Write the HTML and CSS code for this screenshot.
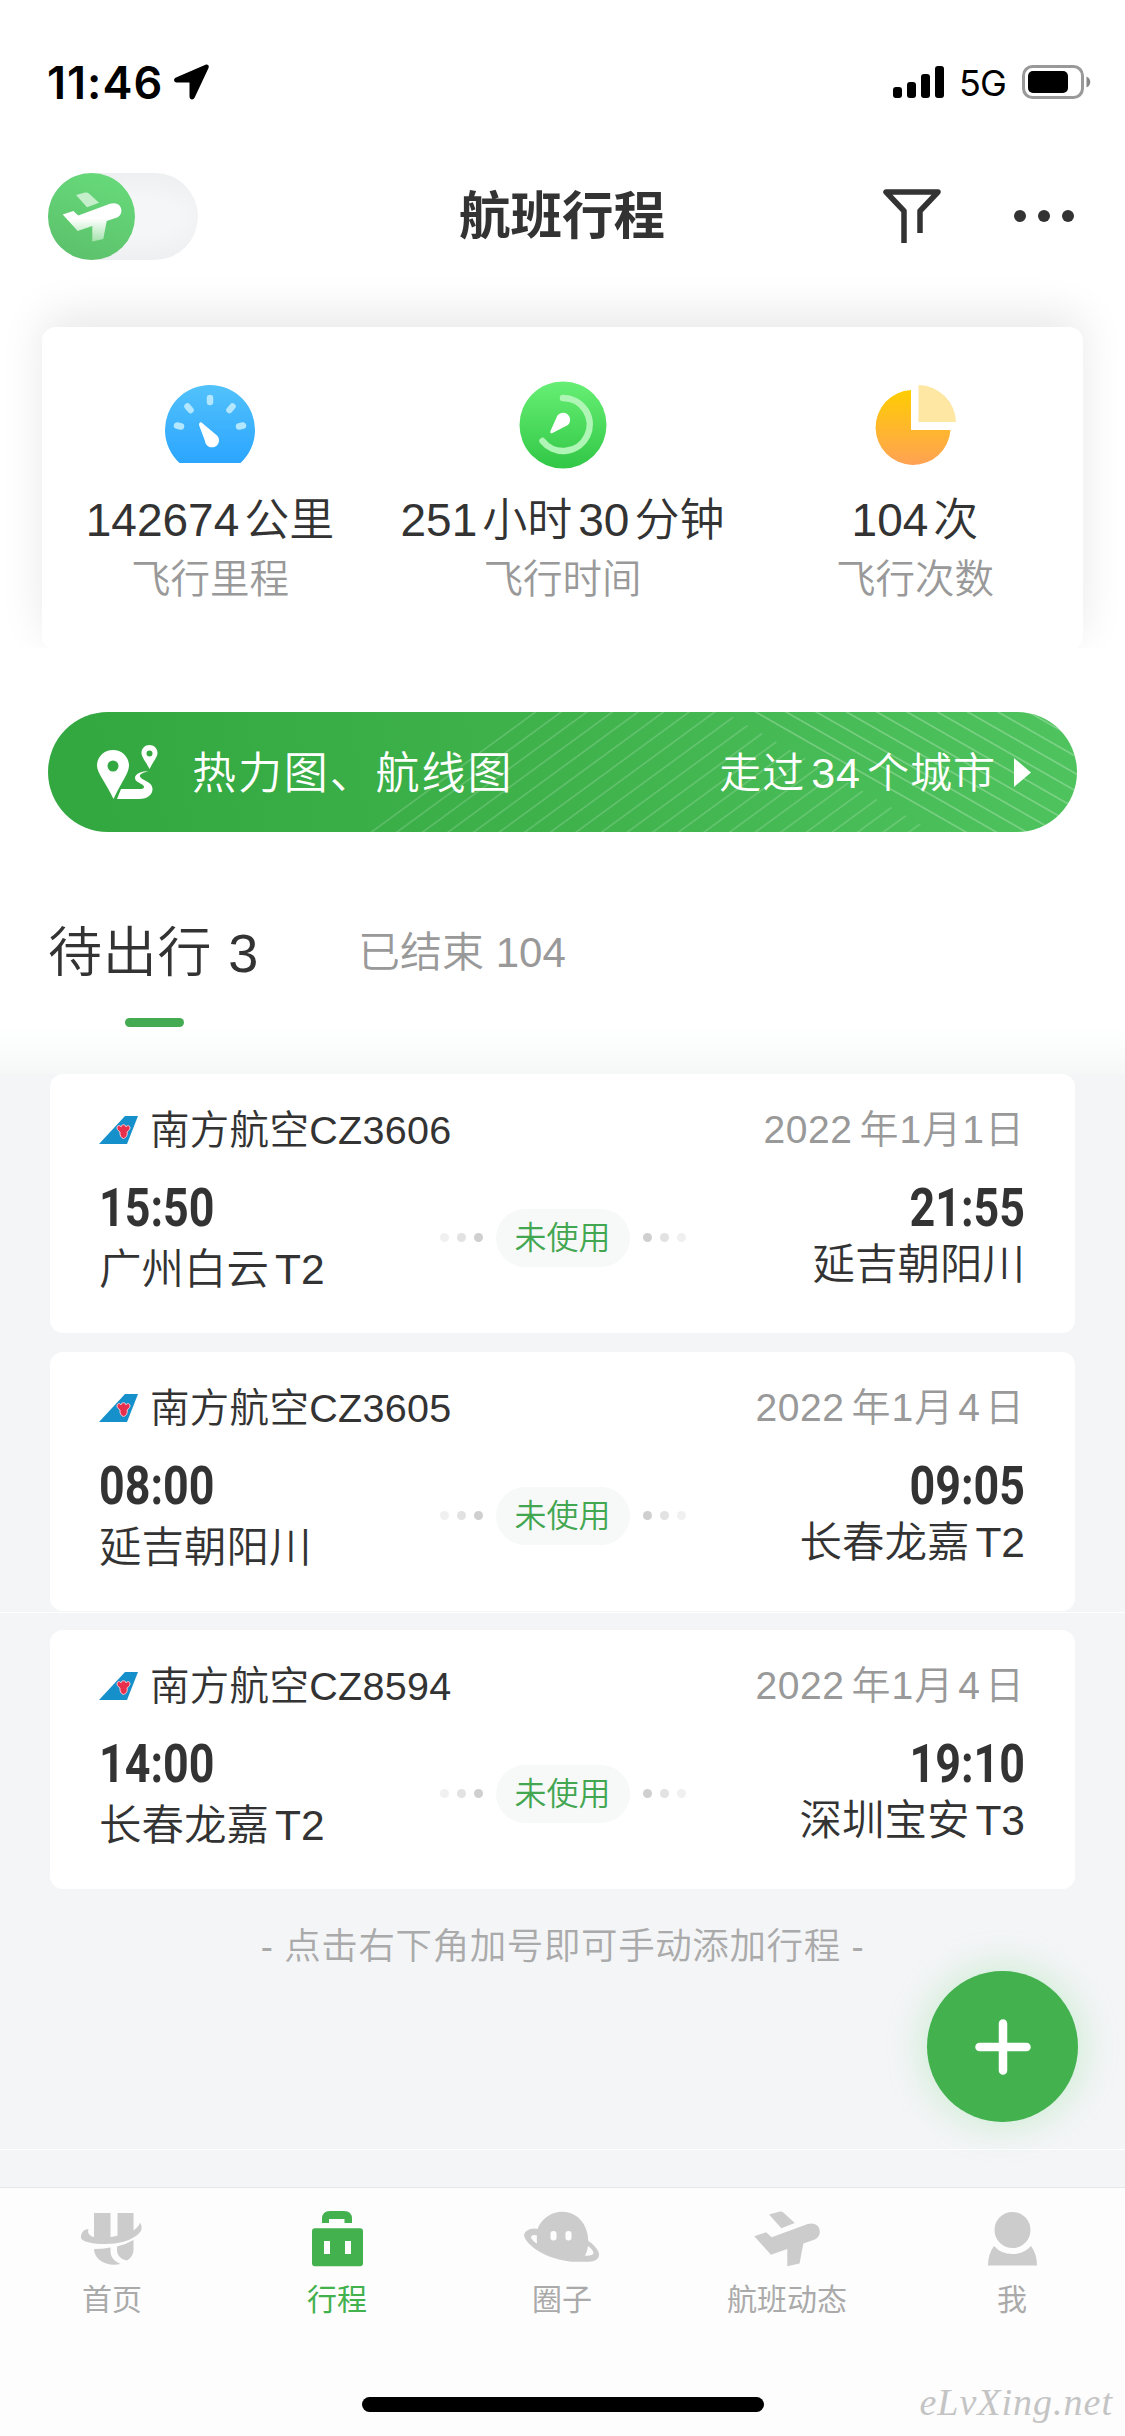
FILE: index.html
```html
<!DOCTYPE html>
<html lang="zh-CN">
<head>
  <meta charset="UTF-8" />
  <title>航班行程</title>
  <link rel="stylesheet" href="styles.css">
</head>
<body>
  <!-- shared icons -->
  <svg class="defs" width="0" height="0">
    <defs>
      <linearGradient id="planeFill" x1="0" y1="0" x2="0" y2="1">
        <stop offset="0" stop-color="#fff" />
        <stop offset=".4" stop-color="#fff" />
        <stop offset="1" stop-color="#a4e2ac" />
      </linearGradient>
      <symbol id="tail" viewBox="0 0 39 28">
        <path d="M26 0H39L28 28H0Z" fill="#1590cb" />
        <path d="M18 12c0-3 3-3 4-1 0-3 5-3 5 0 1-2 4-2 4 1 0 2-2 3-3 4 1 3-1 6-3.500 6.500C22 22 20.500 19 21 16c-1-1-3-2-3-4Z" fill="#e8304c" stroke="#f5c9d6" stroke-width="1" />
      </symbol>
    </defs>
  </svg>

  <div class="phone">
    <div class="top">
      <div class="status-bar">
        <div class="clock">11:46</div>
        <svg class="location" width="36" height="36" viewBox="0 0 36 36">
          <path d="M31.500 .8 2 13.500c-3 1.300-2.300 5 .8 5H15.500V32.500c0 3.300 3.800 4 5.200 1L34.500 4c1-2.200-.8-4-3-3.200Z" />
        </svg>
        <svg class="signal" width="52" height="32" viewBox="0 0 52 32">
          <rect x="0" y="21" width="9" height="11" rx="3" />
          <rect x="14" y="16" width="9" height="16" rx="3" />
          <rect x="28" y="8" width="9" height="24" rx="3" />
          <rect x="42" y="0" width="9" height="32" rx="3" />
        </svg>
        <div class="network">5G</div>
        <svg class="battery" width="69" height="34" viewBox="0 0 69 34">
          <rect x="1.500" y="1.500" width="59" height="31" rx="9" fill="none" stroke="#999" stroke-width="3" />
          <rect x="6" y="6" width="40" height="22" rx="5" />
          <path d="M64.500 11.500c5 2 5 9 0 11Z" fill="#888" />
        </svg>
      </div>

      <div class="nav-bar">
        <div class="switch">
          <div class="knob">
            <svg width="87" height="87" viewBox="0 0 87 87">
              <path d="M28 22 37 19.500Q39.500 19 41 20.500L51 29.700 39 34.300Z" fill="#c4efca" />
              <path d="M14.700 41.500 25.300 38 30.300 42.500 62 30.800C74 27 77 41 69 44.500L58.700 48 55.300 66 44.300 68.500V53L29.700 58Z" fill="url(#planeFill)" />
            </svg>
          </div>
        </div>
        <h1>航班行程</h1>
        <svg class="filter" width="58" height="54" viewBox="0 0 58 54" fill="none" stroke="#333" stroke-width="5.500" stroke-linejoin="round">
          <path d="M21 54V22L3 3H55L37 22V44" />
        </svg>
        <div class="more"><i></i><i></i><i></i></div>
      </div>
    </div>

    <div class="stats">
      <div class="stat">
        <svg width="90" height="88" viewBox="0 0 90 88">
          <defs>
            <linearGradient id="blue" x1="0" y1="0" x2="0" y2="1">
              <stop offset="0" stop-color="#52c2fb" /><stop offset="1" stop-color="#2ba5ff" />
            </linearGradient>
          </defs>
          <path d="M14.500 82A45 45 0 1 1 75.500 82Z" fill="url(#blue)" />
          <g stroke="#b3e6ff" stroke-width="6.500" stroke-linecap="round">
            <path d="M45 17v4M22.500 25.500l3 3.500M67.500 25.500l-3 3.500M12 44.500l4 1M78 44.500l-4 1" />
          </g>
          <path d="M36.500 41.500 52 54.500A7 7 0 1 1 40 60L34 44Q34 40.500 36.500 41.500Z" fill="#fff" />
        </svg>
        <div class="value"><span>142674</span>公里</div>
        <div class="label">飞行里程</div>
      </div>
      <div class="stat stat-time">
        <svg width="88" height="88" viewBox="0 0 88 88">
          <defs>
            <linearGradient id="green" x1="0" y1="0" x2="0" y2="1">
              <stop offset="0" stop-color="#66ef74" /><stop offset="1" stop-color="#32c746" />
            </linearGradient>
          </defs>
          <circle cx="44" cy="44" r="43.500" fill="url(#green)" />
          <path d="M44 17A26.500 26.500 0 1 1 23.500 60" fill="none" stroke="#aff5b5" stroke-width="6.500" stroke-linecap="round" />
          <path d="M37.500 36.500A7 7 0 1 1 46 45.500L33.500 52Q30.500 53 31.500 50Z" fill="#fff" />
        </svg>
        <div class="value"><span>251</span>小时<span class="mid">30</span>分钟</div>
        <div class="label">飞行时间</div>
      </div>
      <div class="stat">
        <svg width="82" height="88" viewBox="0 0 82 88">
          <defs>
            <linearGradient id="orange" x1="0" y1="0" x2="0" y2="1">
              <stop offset="0" stop-color="#ffcd02" /><stop offset="1" stop-color="#ffa254" />
            </linearGradient>
          </defs>
          <path d="M37 9A37.500 37.500 0 1 0 76.500 49H37Z" fill="url(#orange)" />
          <path d="M44.500 4A38 38 0 0 1 82 41H44.500Z" fill="#fee6a3" />
        </svg>
        <div class="value"><span>104</span>次</div>
        <div class="label">飞行次数</div>
      </div>
    </div>

    <div class="banner">
      <svg class="stripes" width="1029" height="120" viewBox="0 0 1029 120">
        <defs>
          <pattern id="rise" width="25.600" height="120" patternUnits="userSpaceOnUse" patternTransform="translate(486 0) skewX(-53.8)">
            <rect width="3" height="120" fill="#fff" opacity=".16" />
          </pattern>
          <pattern id="fall" width="30.300" height="120" patternUnits="userSpaceOnUse" patternTransform="translate(706 0) skewX(60.26)">
            <rect width="3.500" height="120" fill="#fff" opacity=".24" />
          </pattern>
        </defs>
        <path d="M484 0H676L886 120H320Z" fill="url(#rise)" />
        <path d="M705 0H1029V120H915Z" fill="url(#fall)" />
      </svg>
      <svg class="route" width="61" height="54" viewBox="0 0 61 54" fill="#fff">
        <path fill-rule="evenodd" d="M16 5C7 5 0 12 0 20.500 0 28 9 38 16.500 54 24 38 32 28 32 20.500 32 12 25 5 16 5Zm0 10.500a5.500 5.500 0 1 1 0 11 5.500 5.500 0 0 1 0-11Z" />
        <path fill-rule="evenodd" d="M52.500 0C48 0 44.500 3.500 44.500 8c0 4 4 8 8 16 4-8 8-12 8-16 0-4.500-3.500-8-8-8Zm0 5.500a3 3 0 1 1 0 6 3 3 0 0 1 0-6Z" />
        <path d="M52 26C44 26 38 29 38 33c0 5 9 5.500 9 9 0 2-3 2-6 2H24L20 54H42C51 54 56 49 55.500 43.500 55 36 44 35.500 43 31.500 42.500 29 46 27.500 52 26Z" />
      </svg>
      <div class="banner-title">热力图、航线图</div>
      <div class="cities">走过<span>34</span>个城市</div>
      <svg class="arrow" width="17" height="29" viewBox="0 0 17 29"><path d="M0 0 17 14.500 0 29Z" fill="#fff" /></svg>
    </div>

    <div class="tabs">
      <div class="tab active">待出行 3</div>
      <div class="tab">已结束 104</div>
    </div>

    <div class="list">
      <div class="card">
        <div class="card-head">
          <svg width="39" height="28"><use href="#tail" /></svg>
          <div class="flight">南方航空CZ3606</div>
          <div class="date"><span class="year">2022</span>年<span>1</span>月<span>1</span>日</div>
        </div>
        <div class="card-body">
          <div class="place">
            <div class="time">15:50</div>
            <div class="city">广州白云<span>T2</span></div>
          </div>
          <div class="state">
            <div class="dots"><i></i><i></i><i></i></div>
            <div class="badge">未使用</div>
            <div class="dots right"><i></i><i></i><i></i></div>
          </div>
          <div class="place arrive">
            <div class="time">21:55</div>
            <div class="city">延吉朝阳川</div>
          </div>
        </div>
      </div>

      <div class="card">
        <div class="card-head">
          <svg width="39" height="28"><use href="#tail" /></svg>
          <div class="flight">南方航空CZ3605</div>
          <div class="date"><span class="year">2022</span>年<span>1</span>月<span class="wide">4</span>日</div>
        </div>
        <div class="card-body">
          <div class="place">
            <div class="time">08:00</div>
            <div class="city">延吉朝阳川</div>
          </div>
          <div class="state">
            <div class="dots"><i></i><i></i><i></i></div>
            <div class="badge">未使用</div>
            <div class="dots right"><i></i><i></i><i></i></div>
          </div>
          <div class="place arrive">
            <div class="time">09:05</div>
            <div class="city">长春龙嘉<span>T2</span></div>
          </div>
        </div>
      </div>

      <div class="card">
        <div class="card-head">
          <svg width="39" height="28"><use href="#tail" /></svg>
          <div class="flight">南方航空CZ8594</div>
          <div class="date"><span class="year">2022</span>年<span>1</span>月<span class="wide">4</span>日</div>
        </div>
        <div class="card-body">
          <div class="place">
            <div class="time">14:00</div>
            <div class="city">长春龙嘉<span>T2</span></div>
          </div>
          <div class="state">
            <div class="dots"><i></i><i></i><i></i></div>
            <div class="badge">未使用</div>
            <div class="dots right"><i></i><i></i><i></i></div>
          </div>
          <div class="place arrive">
            <div class="time">19:10</div>
            <div class="city">深圳宝安<span>T3</span></div>
          </div>
        </div>
      </div>

      <div class="hint">- 点击右下角加号即可手动添加行程 -</div>
    </div>

    <div class="add">
      <svg width="56" height="56" viewBox="0 0 56 56" stroke="#fff" stroke-width="8.500" stroke-linecap="round">
        <path d="M28 4.500V51.500M4.500 28H51.500" />
      </svg>
    </div>

    <div class="tab-bar">
      <div class="item">
        <svg width="62" height="56" viewBox="0 0 62 56" fill="currentColor">
          <path d="M13 2H29.500V26Q33 25.500 36.500 24.500V2H52.500V19.500Q59 15 58.700 11.500 64 18 55 25 42 34 20 33C5 32-1 29 0 25 1 20 4 18.500 7.500 18 6 22 8.500 25 13 26Z" />
          <path d="M13 38Q21 38 29.500 36.500V40C29.500 46 33 50 39.500 53 26 56 13 49 13 38Z" />
          <path d="M36 35.500Q45 33.500 52.500 29V38C52.500 44 50 47 46 49.500 39 48 36 44 36 39Z" />
        </svg>
        <div>首页</div>
      </div>
      <div class="item on">
        <svg width="51" height="56" viewBox="0 0 51 56" fill="currentColor">
          <path d="M10 12V8Q10 0 18 0H32Q40 0 40 8V12H32.500V8H17V12Z" />
          <path fill-rule="evenodd" d="M3 17.300H48Q51 17.300 51 20.300V52.300Q51 55.300 48 55.300H3Q0 55.300 0 52.300V20.300Q0 17.300 3 17.300ZM12 30V43H18V30ZM33 30V43H39V30Z" />
        </svg>
        <div>行程</div>
      </div>
      <div class="item">
        <svg width="76" height="56" viewBox="0 0 76 56" fill="currentColor">
          <path d="M13.500 18C17 8 27 .7 38.500 .7 52 .7 64 12 64.300 30 69 33 72.500 36.500 74.500 41 77 48 70 51 64.300 50.700 55 51 47 51 42.700 50 31 48 20 44 12.700 39 6 34 2 30 .3 25.700-1 20 7 16 13.500 18Z" />
          <path d="M13 24.500C9 23 6 25 7.500 27.500 9 30 11 31.500 13 32.500Q12.500 28 13 24.500ZM64 35Q63.500 40 61 44.700 69 45 69.500 42 69 38.500 64 35Z" fill="#fdfdfd" />
          <rect x="26.500" y="20" width="6" height="9.500" rx="2.700" fill="#fdfdfd" />
          <rect x="41.500" y="20" width="6" height="9.500" rx="2.700" fill="#fdfdfd" />
        </svg>
        <div>圈子</div>
      </div>
      <div class="item">
        <svg width="67" height="56" viewBox="14.500 19 60 50" fill="currentColor">
          <path d="M28 22 37 19.500Q39.500 19 41 20.500L51 29.700 39 34.300Z" />
          <path d="M14.700 41.500 25.300 38 30.300 42.500 62 30.800C74 27 77 41 69 44.500L58.700 48 55.300 66 44.300 68.500V53L29.700 58Z" />
        </svg>
        <div>航班动态</div>
      </div>
      <div class="item">
        <svg width="49" height="56" viewBox="0 0 49 56" fill="currentColor">
          <circle cx="24.500" cy="19" r="18" />
          <path d="M6 35Q13 43 24.500 43T43 35Q49 43 49 54.500H0Q0 43 6 35Z" />
        </svg>
        <div>我</div>
      </div>
    </div>

    <div class="home-indicator"></div>
    <div class="watermark">eLvXing.net</div>
  </div>
</body>
</html>
```

FILE: styles.css
```css
* {
  box-sizing: border-box;
}

body {
  margin: 0;
  background: #fff;
  font-family: "Liberation Sans", "Noto Sans CJK SC", sans-serif;
  font-weight: 350;
  color: #333;
}

.defs {
  position: absolute;
}

svg {
  display: block;
  flex-shrink: 0;
}

.phone {
  position: relative;
  width: 1125px;
  height: 2436px;
  display: flex;
  flex-direction: column;
  overflow: hidden;
  white-space: nowrap;
}

/* status bar */
.status-bar {
  display: flex;
  align-items: center;
  height: 164px;
  padding: 0 34px 0 47px;
  color: #000;
}

.clock {
  width: 127px;
  font: 600 45px/1 Inter, sans-serif;
  letter-spacing: 1px;
}

.signal {
  margin-left: 683px;
}

.network {
  width: 63px;
  margin-left: 14px;
  padding-top: 2px;
  font: 400 36px/1 Inter, sans-serif;
  letter-spacing: -1px;
}

/* nav */
.nav-bar {
  display: flex;
  align-items: center;
  height: 104px;
  padding-left: 48px;
}

.switch {
  width: 150px;
  height: 87px;
  border-radius: 44px;
  background: radial-gradient(ellipse at 60% 50%, #f5f6f8 30%, #ebecee 90%);
}

.knob {
  width: 87px;
  height: 87px;
  border-radius: 50%;
  background: linear-gradient(200deg, #68dc7c, #5bbf6a);
}

h1 {
  margin: 0 0 0 261px;
  width: 424px;
  font-size: 51.5px;
  font-weight: 700;
  line-height: 60px;
}

.more {
  display: flex;
  gap: 12px;
  margin-left: 73px;
}

.more i {
  width: 12px;
  height: 12px;
  border-radius: 50%;
  background: #333;
}

/* totals */
.stats {
  display: grid;
  grid-template-columns: 336px 1fr 336px;
  height: 323px;
  margin: 59px 42px 0;
  padding-top: 54px;
  border-radius: 14px;
  background: #fff;
  box-shadow: 0 -13px 44px rgba(0, 0, 0, 0.09);
  clip-path: inset(-70px -42px 2px -42px);
}

.stat {
  display: flex;
  flex-direction: column;
  align-items: center;
}

.value {
  margin-top: 18px;
  font-size: 45px;
  line-height: 66px;
}

.value span {
  margin-right: 5px;
  font-size: 46px;
}

.value .mid {
  margin-left: 6px;
}

.label {
  margin-top: -2px;
  font-size: 39.5px;
  line-height: 54px;
  color: #999;
}

/* map entry */
.banner {
  position: relative;
  display: flex;
  align-items: center;
  height: 120px;
  margin: 62px 48px 0;
  padding: 0 46px 0 49px;
  border-radius: 60px;
  overflow: hidden;
  background: linear-gradient(80deg, #33a840 5%, #3fb24c 50%, #4fc45e);
  color: #fff;
}

.stripes {
  position: absolute;
  left: 0;
  top: 0;
}

.banner-title {
  margin-left: 34px;
  padding-top: 4px;
  font-size: 44px;
  line-height: 64px;
  letter-spacing: 1.9px;
}

.cities {
  margin-left: auto;
  padding-top: 3px;
  font-size: 42px;
  line-height: 64px;
  letter-spacing: 1px;
}

.cities span {
  margin: 0 6px;
  font-size: 43px;
}

.arrow {
  margin-left: 18px;
}

/* tabs */
.tabs {
  display: flex;
  align-items: center;
  height: 242px;
  padding-left: 48px;
  background: linear-gradient(#fff 80%, #f6f8f8);
}

.tab {
  font-size: 42px;
  line-height: 64px;
  color: #999;
}

.tab.active {
  position: relative;
  width: 310px;
  font-size: 54px;
  letter-spacing: 0.8px;
  color: #333;
}

.tab.active::after {
  content: "";
  position: absolute;
  left: 77px;
  top: 97px;
  width: 59px;
  height: 9px;
  border-radius: 5px;
  background: #45ab53;
}

/* trips */
.list {
  flex: 1;
  display: flex;
  flex-direction: column;
  gap: 19px;
  padding: 0 50px;
  background: linear-gradient(#fff, #fff) 0 538px / 100% 1px no-repeat,
    linear-gradient(#fff, #fff) 0 1075px / 100% 1px no-repeat, #f4f5f7;
}

.card {
  height: 259px;
  padding: 28px 51px 0 49px;
  border-radius: 13px;
  background: #fff;
}

.card-head {
  display: flex;
  align-items: center;
  height: 56px;
  font-size: 39.5px;
  line-height: 56px;
}

.flight {
  margin-left: 12px;
  letter-spacing: 0.3px;
}

.date {
  margin-left: auto;
  font-size: 39px;
  color: #999;
}

.date span {
  margin: 0 1px;
}

.date .year {
  margin: 0 7px 0 0;
  letter-spacing: 0.6px;
}

.date .wide {
  margin: 0 5px;
}

.card-body {
  display: flex;
  justify-content: space-between;
}

.place {
  width: 330px;
}

.time {
  height: 73px;
  font-family: Roboto, sans-serif;
  font-size: 54px;
  font-weight: 700;
  line-height: 100px;
  transform: scaleX(0.83);
  transform-origin: left;
}

.city {
  font-size: 42.5px;
  line-height: 76px;
  margin-top: 1px;
}

.city span {
  margin-left: 6px;
}

.arrive {
  width: 331px;
  margin-right: -1px;
  text-align: right;
}

.arrive .time {
  transform-origin: right;
}

.arrive .city {
  margin-top: -4px;
}

.state {
  display: flex;
  align-items: center;
  height: 57px;
  margin-top: 51px;
  padding-left: 2px;
}

.badge {
  width: 134px;
  margin: 0 13px;
  border-radius: 29px;
  background: #f7f9f9;
  color: #43a651;
  font-size: 32px;
  line-height: 58px;
  text-align: center;
}

.dots {
  display: flex;
  gap: 8px;
}

.dots i {
  width: 9px;
  height: 9px;
  border-radius: 50%;
  background: #f0f0f0;
}

.dots i:nth-child(2) {
  background: #e2e2e2;
}

.dots i:nth-child(3) {
  background: #cfcfcf;
}

.dots.right {
  flex-direction: row-reverse;
}

.hint {
  margin-top: 12px;
  text-align: center;
  font-size: 36.5px;
  line-height: 54px;
  letter-spacing: 0.6px;
  color: #aaa;
}

.add {
  position: absolute;
  left: 927px;
  top: 1971px;
  width: 151px;
  height: 151px;
  display: flex;
  align-items: center;
  justify-content: center;
  border-radius: 50%;
  background: #43b14e;
  box-shadow: 0 0 40px rgba(80, 210, 100, 0.3);
}

/* bottom bar */
.tab-bar {
  display: grid;
  grid-template-columns: repeat(5, 225px);
  height: 249px;
  padding-top: 23px;
  border-top: 1px solid #e6e7e8;
  background: #fdfdfd;
}

.item {
  display: flex;
  flex-direction: column;
  align-items: center;
  gap: 11px;
  padding-right: 1px;
  font-size: 30px;
  font-weight: 400;
  line-height: 44px;
  color: #ccc;
}

.item div {
  color: #aaa;
}

.item.on,
.item.on div {
  color: #43b14e;
}

.home-indicator {
  position: absolute;
  left: 362px;
  bottom: 24px;
  width: 402px;
  height: 15px;
  border-radius: 8px;
  background: #000;
}

.watermark {
  position: absolute;
  right: 12px;
  bottom: 12px;
  font: italic 38px/44px "Liberation Serif", cursive;
  letter-spacing: 1px;
  color: #c4c4c4;
}
```
